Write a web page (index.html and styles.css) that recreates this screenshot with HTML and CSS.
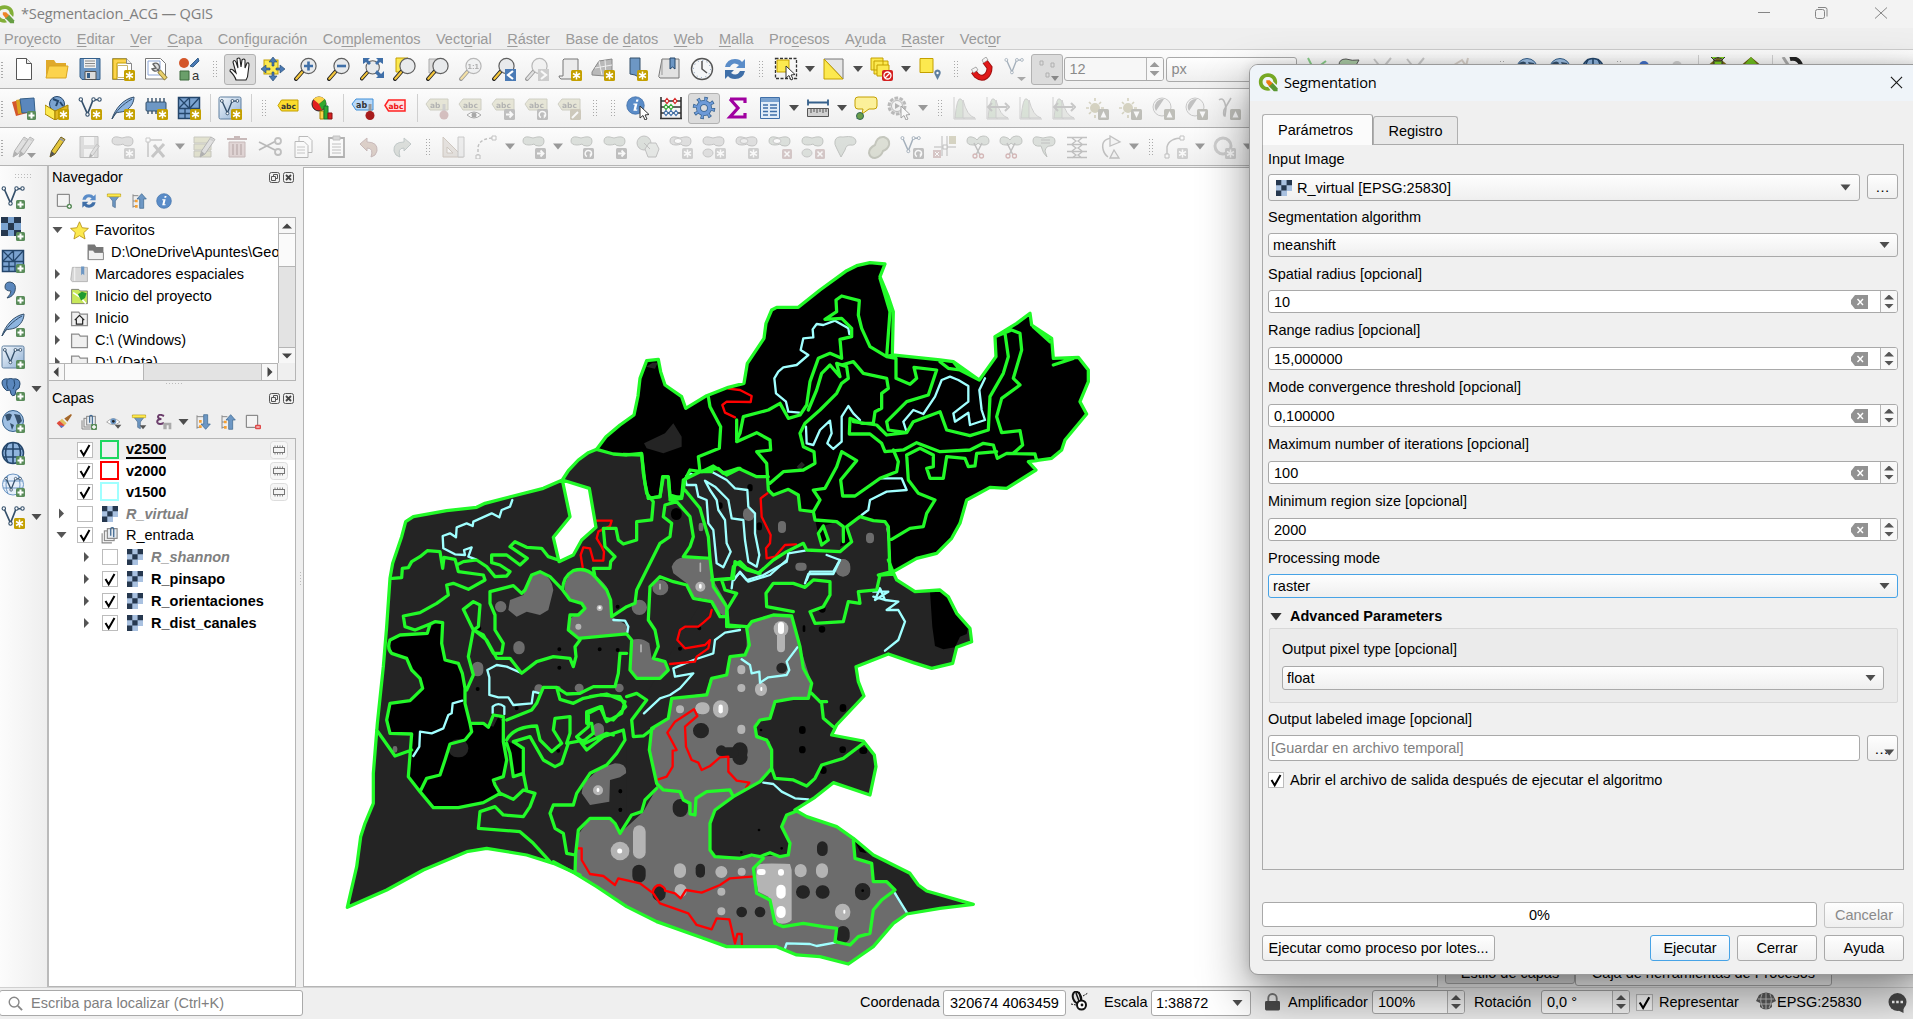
FILE: index.html
```html
<!DOCTYPE html>
<html lang="es">
<head>
<meta charset="utf-8">
<title>*Segmentacion_ACG — QGIS</title>
<link rel="stylesheet" href="styles.css">
</head>
<body>
<svg class="defs" width="0" height="0">
<defs>
<linearGradient id="gl" x1="0" y1="0" x2="1" y2="1"><stop offset="0" stop-color="#f4f8fc"/><stop offset="1" stop-color="#8fb0d4"/></linearGradient>
</defs>
<!-- badges -->
<symbol id="b-new" viewBox="0 0 24 24"><rect x="13" y="13" width="11" height="11" rx="1.5" fill="#c4a000"/><path d="M18.500 14.500v8M15 16.500l7 4M22 16.500l-7 4" stroke="#fff" stroke-width="1.500"/></symbol>
<symbol id="b-add" viewBox="0 0 24 24"><rect x="15" y="15" width="9" height="9" rx="1.500" fill="#5a8c5a"/><path d="M19.500 16.500v6M16.500 19.500h6" stroke="#fff" stroke-width="2"/></symbol>
<symbol id="b-arr" viewBox="0 0 24 24"><rect x="13" y="13" width="11" height="11" rx="1.500" fill="#777"/><path d="M15 18.500h6M18.500 15.500l3 3l-3 3" stroke="#fff" stroke-width="1.800" fill="none"/></symbol>
<symbol id="b-rot" viewBox="0 0 24 24"><rect x="13" y="13" width="11" height="11" rx="1.500" fill="#777"/><path d="M17 21.500a3.200 3.200 0 1 1 3.500-.5v-2.500" stroke="#fff" stroke-width="1.500" fill="none"/></symbol>
<symbol id="b-up" viewBox="0 0 24 24"><rect x="13" y="13" width="11" height="11" rx="1.500" fill="#77776a"/><path d="M18.500 15l3 6.500h-6z" fill="#fff"/></symbol>
<symbol id="b-down" viewBox="0 0 24 24"><rect x="13" y="13" width="11" height="11" rx="1.500" fill="#77776a"/><path d="M18.500 22l3-6.500h-6z" fill="#fff"/></symbol>
<symbol id="b-x" viewBox="0 0 24 24"><rect x="14" y="14" width="10" height="10" rx="1.500" fill="#a98a8a"/><path d="M16.500 16.500l5 5M21.500 16.500l-5 5" stroke="#fff" stroke-width="1.500"/></symbol>
<!-- shared shapes -->
<symbol id="logo" viewBox="0 0 24 24"><path d="M12 1.500C5.500 1.500 1 6 1 12s4.500 10.500 11 10.500c1.500 0 2.500-.2 3-.5l-3-4c-4 0-6.500-2.500-6.500-6S8 6 12 6s6.300 2.500 6.300 5.500l4 4c.5-1 .7-2.500.7-3.500C23 6 18.500 1.500 12 1.500z" fill="#76a824"/><path d="M13 13h4.500l6 6.500V23H19l-6-6z" fill="#589632"/><path d="M10 10h4l3.500 3.500L13.500 17 10 13z" fill="#ee7913"/></symbol>
<symbol id="mag" viewBox="0 0 24 24"><path d="M2 22L9 14" stroke="#222" stroke-width="4" stroke-linecap="round"/><path d="M2.300 21.700L8 15.200" stroke="#f5c73d" stroke-width="2.200" stroke-linecap="round"/><circle cx="14.500" cy="9" r="7.600" fill="#e8eaec" stroke="#5f5f5f" stroke-width="1.200"/></symbol>
<symbol id="vee" viewBox="0 0 24 24"><path d="M3 3.500L9.500 18 15 4l6.500-.5" fill="none" stroke="#35506b" stroke-width="1.700"/><g fill="#fff" stroke="#35506b" stroke-width="1.100"><circle cx="2.800" cy="3.500" r="1.700"/><circle cx="9.500" cy="18.500" r="1.700"/><circle cx="15.500" cy="3.500" r="1.700"/><circle cx="21.500" cy="3.500" r="1.700"/></g></symbol>
<symbol id="vec-new" viewBox="0 0 24 24"><use href="#vee"/><use href="#b-new"/></symbol>
<symbol id="vec-add" viewBox="0 0 24 24"><use href="#vee"/><use href="#b-add"/></symbol>
<symbol id="feather" viewBox="0 0 24 24"><path d="M1 23C4 13 12 3 23 1c0 5-3 11-9 14-4 1.500-7 1-9 2z" fill="#8db4e0" stroke="#35506b"/><path d="M1 23C5 15 12 8 21 3" stroke="#35506b" fill="none"/></symbol>
<symbol id="chip" viewBox="0 0 24 24"><path d="M4 2v16M8 2v16M12 2v16M16 2v16M20 2v16" stroke="#35506b" stroke-width="1.400"/><rect x="2" y="6" width="20" height="9" rx="1" fill="#6d97c4" stroke="#35506b"/></symbol>
<symbol id="mesh" viewBox="0 0 24 24"><rect x="1.500" y="1.500" width="21" height="21" fill="#7ba3d0" stroke="#24466b" stroke-width="1.500"/><path d="M1.500 12.500h21M12.500 1.500v11M8 12.500v10M2 2l10 10M12 2L2 12M22 2L13 12M2 17.500h12M14 13v9" stroke="#24466b" stroke-width="1.300"/></symbol>
<symbol id="virt" viewBox="0 0 24 24"><rect x="1" y="1" width="22" height="22" rx="1.500" fill="url(#gl)" stroke="#5f7f9f"/><use href="#vee" x="1.500" y="2" width="20" height="20"/></symbol>
<symbol id="raster" viewBox="0 0 16 16"><path d="M0 0h16v11h-5v5H0z" fill="#a9c1e0"/><path d="M0 0h5.300v5.300H0zM10.600 0H16v5.300h-5.400zM5.300 5.300h5.300v5.300H5.300zM0 10.600h5.300V16H0z" fill="#26384f"/></symbol>
<symbol id="globe" viewBox="0 0 24 24"><circle cx="12" cy="12" r="10.500" fill="#9fc0e4" stroke="#35608b"/><path d="M4 6q5-3 7 0l-2 5-3 1zM13 5l6 1 2 6-4 4-2-6zM9 14l4 2-2 5z" fill="#35506b"/></symbol>
<symbol id="globeg" viewBox="0 0 24 24"><circle cx="12" cy="12" r="10.500" fill="#8fb4dd" stroke="#24466b" stroke-width="1.500"/><path d="M2 8h20M2 16h20M12 1v22M7 2q-5 10 0 20M17 2q5 10 0 20" stroke="#24466b" stroke-width="1.600" fill="none"/></symbol>
<symbol id="blob" viewBox="0 0 24 24"><path d="M1 6q0-5 6-4 4 2 8 0 7-1 7 4t-5 5q-4 0-5-2-2 1-5 1-6 0-6-4z" fill="#b5bfb5" stroke="#777d77"/></symbol>
<symbol id="pencil" viewBox="0 0 24 24"><path d="M5 22l1.500-6L16 2l4 2.500L10 19z" fill="#e4c63c" stroke="#6b5a1a"/><path d="M5 22l1.500-6 3.500 3z" fill="#555"/><path d="M15 3.500l4 2.500" stroke="#999" stroke-width="2"/></symbol>
<symbol id="grp" viewBox="0 0 24 24"><path d="M1.500 9.500v13h13" fill="none" stroke="#888" stroke-width="1.500"/><rect x="4.500" y="6.500" width="13" height="13" fill="#eee" stroke="#888" stroke-width="1.500"/><rect x="8.500" y="3.500" width="13" height="13" fill="#e6ebf0" stroke="#888" stroke-width="1.500"/><path d="M13 13V4a2 2 0 0 1 4 0v11" fill="none" stroke="#35608b" stroke-width="1.600"/></symbol>
<symbol id="fold" viewBox="0 0 24 24"><path d="M2 4h9l2 2.500h9V21H2z" fill="#f0f0f0" stroke="#8c8c8c" stroke-width="1.600"/></symbol>
<symbol id="sync" viewBox="0 0 24 24"><path d="M2 10Q4 2 12 2q5 0 7 3l3-3v9h-9l3-3q-6-4-9 2z" fill="#5a8cc8"/><path d="M22 14q-2 8-10 8-5 0-7-3l-3 3v-9h9l-3 3q6 4 9-2z" fill="#3f6fa8"/></symbol>
<symbol id="filter" viewBox="0 0 24 24"><path d="M2 2h20l-8 10v10l-4-2v-8z" fill="#6d97c4" stroke="#4a6a8c"/><path d="M2 1.500h20v4H2z" fill="#fce94f" stroke="#c4a000" stroke-width=".8"/></symbol>
<symbol id="tree-up" viewBox="0 0 24 24"><path d="M3 2v20M3 4h8M3 20h6M3 12h4" stroke="#8a8a8a" stroke-width="1.500"/><path d="M6 10h4v4H6zM6 18h4v4H6z" fill="#f5a032"/><path d="M16 1l7 8h-4v14h-6V9H9z" fill="#6d97c4" stroke="#35608b"/></symbol>
<symbol id="tree-down" viewBox="0 0 24 24"><path d="M3 2v20M3 4h10M3 20h6" stroke="#8a8a8a" stroke-width="1.500"/><path d="M6 9h4v4H6zM6 17h4v4H6z" fill="#f5a032"/><path d="M16 23l7-8h-4V1h-6v14H9z" fill="#6d97c4" stroke="#35608b"/></symbol>
<symbol id="info" viewBox="0 0 24 24"><circle cx="12" cy="12" r="11" fill="#5a8cc8" stroke="#3f6fa8"/><path d="M13 4.500h2.800l-.6 2.800h-2.800zM9.500 9.500h5l-1.800 7.500h1.800l-.4 1.500H9.300l1.700-7.500H9.200z" fill="#fff"/></symbol>
<symbol id="cursor" viewBox="0 0 24 24"><path d="M12 9v12l3-2.500 2 4.500 2-1-2-4 4-.5z" fill="#fff" stroke="#333"/></symbol>
<symbol id="tag" viewBox="0 0 24 24"><path d="M1 8l4-5h18v11H5z" fill="#cfcdaa" stroke="#98977f"/></symbol>
<symbol id="hist" viewBox="0 0 24 24"><path d="M1 1v22h22" stroke="#999" fill="none"/><path d="M2 22Q4 0 8 3t4 19z" fill="#b4c8b0" stroke="#999"/><path d="M10 22V4q4 16 12 18z" fill="#d0d4cc" stroke="#999"/></symbol>
<symbol id="sun" viewBox="0 0 24 24"><circle cx="10" cy="12" r="5" fill="#a8a27a"/><path d="M10 2v3M10 19v3M1 12h3M16 12h3M4 6l2 2M16 6l-2 2M4 18l2-2" stroke="#a8a27a" stroke-width="1.700"/></symbol>
<symbol id="contrast" viewBox="0 0 24 24"><circle cx="11" cy="11" r="9" fill="#eee" stroke="#888"/><path d="M13 3a8 8 0 0 0-8 12z" fill="#777"/></symbol>
<symbol id="scis" viewBox="0 0 24 24"><path d="M1 6q0-5 5-4 4 1 5 3 2-4 6-4 6 0 6 5 0 4-5 4-5 0-6-2-1 3-5 2-6 0-6-4z" fill="#b5bfb5" stroke="#777d77"/><path d="M8 8l6 12M16 8l-6 12" stroke="#777" stroke-width="1.500"/><circle cx="9" cy="21" r="2" fill="none" stroke="#a66" stroke-width="1.300"/><circle cx="15.500" cy="21" r="2" fill="none" stroke="#a66" stroke-width="1.300"/></symbol>
<symbol id="float" viewBox="0 0 11 11"><rect x=".5" y=".5" width="10" height="10" rx="2" fill="none" stroke="#555"/><path d="M4.500 4V2.500h4v4H7M2.500 4.500h4v4h-4z" fill="none" stroke="#555"/></symbol>
<symbol id="closeb" viewBox="0 0 11 11"><rect x=".5" y=".5" width="10" height="10" rx="2" fill="none" stroke="#555"/><path d="M3 3l5 5M8 3L3 8" stroke="#444" stroke-width="1.800"/></symbol>
<symbol id="mem" viewBox="0 0 18 18"><rect x=".5" y=".5" width="17" height="17" rx="3" fill="#f6f6f6" stroke="#ddd"/><path d="M5 4.500v9M7.500 4.500v9M10 4.500v9M12.500 4.500v9" stroke="#888"/><rect x="3.500" y="6.500" width="11" height="5" fill="#f4f4f4" stroke="#777"/></symbol>
<symbol id="clr" viewBox="0 0 17 14"><path d="M4 0h13v14H4L0 9V5z" fill="#929292"/><path d="M6.500 4l5.500 6M12 4l-5.500 6" stroke="#fff" stroke-width="1.400"/></symbol>
<symbol id="tick" viewBox="0 0 16 16"><rect x=".5" y=".5" width="15" height="15" fill="#fff" stroke="#bcbcbc"/><path d="M3.500 8l3.200 5.200L12.500 3" fill="none" stroke="#000" stroke-width="2"/></symbol>
<symbol id="untick" viewBox="0 0 16 16"><rect x=".5" y=".5" width="15" height="15" fill="#fff" stroke="#bcbcbc"/></symbol>
</svg>

<header class="titlebar">
  <svg class="logo"><use href="#logo"/></svg><span class="wtitle">*Segmentacion_ACG — QGIS</span>
  <svg class="winbtns" viewBox="0 0 160 28"><g fill="none" stroke="#858585"><path d="M15 12.500h12"/><rect x="72.500" y="9.500" width="9" height="9" rx="2"/><path d="M75 7.500h7q2 0 2 2v7"/><path d="M132 7.500l12 11M144 7.500l-12 11"/></g></svg>
</header>
<nav class="menubar"><span>Pro<u>y</u>ecto</span><span><u>E</u>ditar</span><span><u>V</u>er</span><span><u>C</u>apa</span><span>Con<u>f</u>iguración</span><span>Co<u>m</u>plementos</span><span>Vect<u>o</u>rial</span><span><u>R</u>áster</span><span>Base de <u>d</u>atos</span><span><u>W</u>eb</span><span><u>M</u>alla</span><span>Pro<u>c</u>esos</span><span>A<u>y</u>uda</span><span><u>R</u>aster</span><span>Vect<u>o</u>r</span></nav>

<div class="toolbar">
  <i class="s"><svg viewBox="0 0 24 24"><path d="M4.500 1.500h10l5 5v16h-15z" fill="#fff" stroke="#555"/><path d="M14.500 1.500v5h5" fill="#eee" stroke="#555"/></svg></i>
  <i class="s"><svg viewBox="0 0 24 24"><path d="M1 3h8l2 3h10v4H4L1 20z" fill="#e0a92a"/><path d="M4 9h19l-2 12H1z" fill="#fcd34c" stroke="#d9a520"/></svg></i>
  <i class="s"><svg viewBox="0 0 24 24"><path d="M2 1.500h20v21H4L2 20z" fill="#6d97c4" stroke="#35608b"/><path d="M6 2h12v9H6z" fill="#f0f0f0"/><path d="M7 4h10M7 6.500h10M7 9h10" stroke="#888"/><path d="M7 14.500h11v8H7z" fill="#dcdcdc" stroke="#555"/><path d="M9 16h3v5H9z" fill="#35608b"/></svg></i>
  <i class="s"><svg viewBox="0 0 24 24"><path d="M1.500 1.500h14l5 5v16h-19z" fill="#fff" stroke="#888"/><path d="M2 2h14v4H6v16H2z" fill="#fcd34c" stroke="#c4a000"/><path d="M6.500 8.500h10v12h-10z" fill="#fff" stroke="#c9b46a"/><path d="M15.500 1.500v5h5" fill="#eee" stroke="#888"/><use href="#b-new"/></svg></i>
  <i class="s"><svg viewBox="0 0 24 24"><path d="M1.500 1.500h15l5 5v15.500h-20z" fill="#fff" stroke="#777"/><path d="M4 4h12v14H4z" fill="#fff" stroke="#8fa8d8"/><path d="M9 7a4 4 0 1 1-1 5l4-1zM13 12l4 4" fill="#ddd" stroke="#666" stroke-width="1.400"/><path d="M15 14l7 8" stroke="#8a7a3a" stroke-width="4.500"/><path d="M15.500 14.500l6 7" stroke="#e8cf6a" stroke-width="2.800"/></svg></i>
  <i class="s"><svg viewBox="0 0 24 24"><circle cx="7" cy="6" r="5" fill="#d4562a"/><path d="M13 9l8-8 1 3-6 6z" fill="#4a7ab5" stroke="#35608b"/><path d="M3 14h9v9H3z" fill="#6a9f6a" stroke="#3c6b3c"/><text x="15" y="23" font-family="Liberation Sans,sans-serif" font-size="13" fill="#333">a</text></svg></i>
  <i class="grip"></i>
  <i class="s on"><svg viewBox="0 0 24 24"><path d="M8 23q-1-4-6-9 0-3 3-1l3 3-3-11q1-3 3 0l2 6-1-9q2-2 3 0l1 8 1-7q2-2 3 0v8l2-5q2-1 2 2l-1 8q0 4-2 7z" fill="#fff" stroke="#222" stroke-width="1.100"/></svg></i>
  <i class="s"><svg viewBox="0 0 24 24"><rect x="3" y="3" width="14" height="14" fill="#fce94f" stroke="#c4a000"/><path d="M12 0l4 5h-3v4h-2V5H8zM12 24l4-5h-3v-4h-2v4H8zM0 12l5-4v3h4v2H5v3zM24 12l-5-4v3h-4v2h4v3z" fill="#4a7ab5" stroke="#24466b" stroke-width=".6"/></svg></i>
  <i class="s"><svg viewBox="0 0 24 24"><use href="#mag"/><path d="M14.500 4.500v9M10 9h9" stroke="#3f6fa8" stroke-width="2.600"/></svg></i>
  <i class="s"><svg viewBox="0 0 24 24"><use href="#mag"/><path d="M10 9h9" stroke="#3f6fa8" stroke-width="2.600"/></svg></i>
  <i class="s"><svg viewBox="0 0 24 24"><use href="#mag" width="21" height="24" y="1"/><path d="M3 1h7L8 3l3 3-2 2-3-3-3 2zM23 1h-7l2 2-3 3 2 2 3-3 3 2zM24 21h-8l2-2-3-3 2-3 4 4 3-3z" fill="#3f6fa8"/></svg></i>
  <i class="s"><svg viewBox="0 0 24 24"><path d="M3 1h12v14H3z" fill="#fce94f" stroke="#c4a000"/><use href="#mag"/></svg></i>
  <i class="s"><svg viewBox="0 0 24 24"><path d="M3 2h12v14H3z" fill="#ddd" stroke="#aaa"/><use href="#mag"/></svg></i>
  <i class="s dis"><svg viewBox="0 0 24 24"><use href="#mag"/><text x="8.500" y="12" font-family="Liberation Sans,sans-serif" font-weight="bold" font-size="8" fill="#444">1:1</text></svg></i>
  <i class="s"><svg viewBox="0 0 24 24"><use href="#mag"/><path d="M13 12h11v12H13z" fill="#4a7ab5"/><path d="M21 14l-5 4 5 4" stroke="#fff" stroke-width="2.200" fill="none"/></svg></i>
  <i class="s dis gray"><svg viewBox="0 0 24 24"><use href="#mag"/><path d="M13 12h11v12H13z" fill="#999"/><path d="M16 14l5 4-5 4" stroke="#fff" stroke-width="2.200" fill="none"/></svg></i>
  <i class="s"><svg viewBox="0 0 24 24"><path d="M6 2h14v20H3q-2-1-2-3h4V3z" fill="#ececec" stroke="#777"/><use href="#b-new"/></svg></i>
  <i class="s"><svg viewBox="0 0 24 24"><path d="M1 15L8 4l13-2v13l-7 4-13-1z" fill="#b9b9b9" stroke="#888"/><path d="M4 11l17-3M8 4l3 14M14 3l1 15" stroke="#eee" fill="none"/><use href="#b-new"/></svg></i>
  <i class="s"><svg viewBox="0 0 24 24"><path d="M6 1h10v20l-5-3-5-1z" fill="#6d97c4" stroke="#35506b"/><use href="#b-new"/></svg></i>
  <i class="s"><svg viewBox="0 0 24 24"><path d="M5 2h17v19H3q-2-1-1-3z" fill="#e2e2e2" stroke="#777"/><path d="M5 2v16" stroke="#999"/><path d="M13 1h5v11l-2.500-2-2.500 2z" fill="#6d97c4" stroke="#24466b"/></svg></i>
  <i class="s"><svg viewBox="0 0 24 24"><circle cx="12" cy="12" r="10.500" fill="#f4f6f8" stroke="#555" stroke-width="1.400"/><path d="M12 4v8l5 4" fill="none" stroke="#555" stroke-width="1.500"/><circle cx="12" cy="12" r="8.500" fill="none" stroke="#7a95b5" stroke-dasharray="1 3.450"/></svg></i>
  <i class="s"><svg viewBox="0 0 24 24"><use href="#sync"/></svg></i>
  <i class="grip"></i>
  <i class="s"><svg viewBox="0 0 24 24"><rect x="1.500" y="1.500" width="21" height="20" fill="none" stroke="#333" stroke-width="1.300" stroke-dasharray="3 1.500"/><path d="M3 3h12v12H3z" fill="#fce94f" stroke="#c4a000"/><use href="#cursor"/></svg></i><i class="dd"></i>
  <i class="s"><svg viewBox="0 0 24 24"><path d="M2 2h19v20z" fill="#e6e6e6" stroke="#777"/><path d="M2 2v20h19z" fill="#fce94f" stroke="#c4a000"/></svg></i><i class="dd"></i>
  <i class="s"><svg viewBox="0 0 24 24"><path d="M1 1h12v12H1zM4 4h14v5H8v8H4z" fill="#fce94f" stroke="#c4a000"/><path d="M7 8h12v11H7z" fill="#fce94f" stroke="#c4a000"/><rect x="12" y="13" width="11" height="11" rx="2" fill="#d42020"/><circle cx="17.500" cy="18.500" r="3.500" fill="none" stroke="#fff" stroke-width="1.300"/><path d="M15 21l5-5" stroke="#fff" stroke-width="1.300"/></svg></i><i class="dd"></i>
  <i class="s"><svg viewBox="0 0 24 24"><path d="M2 1.500h13v14H2z" fill="#fce94f" stroke="#c4a000"/><path d="M19.500 23l-3-6q-1-4 3-4.500 4 .5 3 4.500z" fill="#5f7f9f"/><circle cx="19.500" cy="16" r="1.200" fill="#fff"/></svg></i>
  <i class="grip"></i>
  <i class="s"><svg viewBox="0 0 24 24"><path d="M4.500 14.500l3 4q5 4 9 1t4-9l-4.500-6" fill="none" stroke="#a01010" stroke-width="6"/><path d="M4.500 14.500l3 4q5 4 9 1t4-9l-4.500-6" fill="none" stroke="#e01818" stroke-width="4"/><path d="M2.500 12.500l4.500-2.500 2 3-4.500 3zM13 3l4-3 2 3-4.500 3z" fill="#f4f4f4" stroke="#777" stroke-width=".6"/></svg></i>
  <i class="s dis"><svg viewBox="0 0 24 24"><use href="#vee" x="2" width="20" height="20"/><path d="M15 20h9l-4.500 4z" fill="#444"/></svg></i>
  <i class="s on"><svg viewBox="0 0 24 24"><path d="M5 4h3v4H5zM16 6h3v4h-3zM11 16h3v4h-3z" fill="none" stroke="#b0b0b0"/><path d="M16 19h8l-4 5z" fill="#888"/></svg></i>
  <span class="spin tspin"><b>12</b><i class="ud"></i></span>
  <span class="combo px">px</span>
  <i class="s"><svg viewBox="0 0 24 24"><path d="M3 1l6 12 12-9" stroke="#8c8" stroke-width="2" fill="none"/></svg></i>
  <i class="s"><svg viewBox="0 0 24 24"><path d="M1 8q0-6 7-6 6 2 13 1l-4 7H3z" fill="#a9c9a4" stroke="#555"/></svg></i>
  <i class="s dis"><svg viewBox="0 0 24 24"><path d="M3 2l8 10 9-11" stroke="#888" stroke-width="2" fill="none"/></svg></i>
  <i class="s dis"><svg viewBox="0 0 24 24"><path d="M3 2l8 10 9-11" stroke="#888" stroke-width="2" fill="none"/></svg></i>
  <i class="s dis wide"><svg viewBox="0 0 24 24"><path d="M3 8l8-5 4 6 2-8" stroke="#a98" stroke-width="2" fill="none"/></svg></i>
  <i class="grip"></i>
  <i class="s"><svg viewBox="0 0 24 24"><use href="#globe"/></svg></i>
  <i class="s"><svg viewBox="0 0 24 24"><use href="#globe"/></svg></i>
  <i class="s"><svg viewBox="0 0 24 24"><use href="#globeg"/></svg></i>
  <i class="grip"></i>
  <i class="s"><svg viewBox="0 0 24 24"><circle cx="12" cy="9" r="5" fill="#3f6fc8"/></svg></i>
  <i class="s dis"><svg viewBox="0 0 24 24"><circle cx="12" cy="9" r="5" fill="#999"/></svg></i>
  <i class="sep"></i>
  <i class="s"><svg viewBox="0 0 24 24"><path d="M12 0L0 10h24z" fill="#7a6a1a"/><path d="M5 0l4 4h6l4-4M8 2q4-3 8 0v6H8z" fill="#7ed321" stroke="#333"/></svg></i>
  <i class="s"><svg viewBox="0 0 24 24"><path d="M12 0L0 10h24z" fill="#6a5a10"/><path d="M12 0L6 7h12z" fill="#6fbf1f"/></svg></i>
  <i class="sep"></i>
  <i class="s"><svg viewBox="0 0 24 24"><path d="M3 0l9 14" stroke="#aaa" stroke-width="3" fill="none"/><path d="M10 2q8-2 11 6" stroke="#222" stroke-width="4" fill="none"/></svg></i>
</div>

<div class="toolbar">
  <i class="s"><svg viewBox="0 0 24 24"><path d="M0 6l11-3 4 14-11 3z" fill="#d4562a"/><path d="M4 4l12-2 2 14-12 2z" fill="#d9a520"/><path d="M8 3l14-1 1 14-13 1z" fill="#5a87bd" stroke="#35608b"/><use href="#b-add"/></svg></i>
  <i class="s"><svg viewBox="0 0 24 24"><circle cx="12" cy="8" r="7.500" fill="#7ba3d0" stroke="#24466b"/><path d="M8 3l5 2-2 5M15 6l3 4" stroke="#24466b" stroke-width="2" fill="none"/><path d="M0 9l10 6v9L0 18z" fill="#fce94f" stroke="#a88400"/><path d="M10 15l13-6v9l-13 6z" fill="#e0b820" stroke="#a88400"/><use href="#b-new"/></svg></i>
  <i class="s"><svg viewBox="0 0 24 24"><use href="#vec-new"/></svg></i>
  <i class="s"><svg viewBox="0 0 24 24"><use href="#feather"/><use href="#b-new"/></svg></i>
  <i class="s"><svg viewBox="0 0 24 24"><use href="#chip"/><use href="#b-new"/></svg></i>
  <i class="s"><svg viewBox="0 0 24 24"><use href="#mesh"/><use href="#b-new"/></svg></i>
  <i class="sep"></i>
  <i class="s"><svg viewBox="0 0 24 24"><use href="#virt"/><use href="#b-new"/></svg></i>
  <i class="sep"></i><i class="grip"></i>
  <i class="s"><svg viewBox="0 0 24 24"><path d="M1 9.500L4.500 4H21v11H4.500z" fill="#fcdc2c" stroke="#c4a000"/><text x="4" y="12.500" font-family="DejaVu Sans,sans-serif" font-weight="bold" font-size="7.500" fill="#333">abc</text></svg></i>
  <i class="s"><svg viewBox="0 0 24 24"><circle cx="9" cy="8" r="7" fill="#e02020" stroke="#222"/><path d="M9 8L3 3q6-5 12 0z" fill="#fcd34c"/><path d="M9 8l6-5q3 6-3 11z" fill="#2fa82f"/><path d="M10 15h4v8h-4z" fill="#fcd34c" stroke="#a88400"/><path d="M14 10h4v13h-4z" fill="#2fa82f" stroke="#173"/><path d="M18 17h4v6h-4z" fill="#d42020" stroke="#811"/></svg></i>
  <i class="sep"></i>
  <i class="s"><svg viewBox="0 0 24 24"><path d="M1 8l4-5h17v11H5z" fill="#b8d8f8" stroke="#3f8fd8"/><text x="5" y="12" font-family="DejaVu Sans,sans-serif" font-weight="bold" font-size="8" fill="#333">ab</text><path d="M19 8v9" stroke="#999" stroke-width="3"/><circle cx="19" cy="19.500" r="4.500" fill="#a81c1c"/></svg></i>
  <i class="s"><svg viewBox="0 0 24 24"><path d="M1 9.500L4.500 4H21v11H4.500z" fill="#fde0e0" stroke="#f22" stroke-width="1.500"/><text x="4.500" y="12.500" font-family="DejaVu Sans,sans-serif" font-weight="bold" font-size="7.500" fill="#e11">abc</text></svg></i>
  <i class="sep"></i>
  <i class="s dis"><svg viewBox="0 0 24 24"><use href="#tag"/><text x="5" y="11.500" class="tg">ab</text><path d="M19 8v9" stroke="#999" stroke-width="3"/><circle cx="19" cy="19" r="4.500" fill="#a77"/></svg></i>
  <i class="s dis"><svg viewBox="0 0 24 24"><use href="#tag"/><text x="5" y="11.500" class="tg">abc</text><path d="M9 19q7-6 14 0-7 6-14 0z" fill="#fff" stroke="#444"/><circle cx="16" cy="19" r="2.500" fill="#444"/></svg></i>
  <i class="s dis"><svg viewBox="0 0 24 24"><use href="#tag"/><text x="5" y="11.500" class="tg">abc</text><use href="#b-arr"/></svg></i>
  <i class="s dis"><svg viewBox="0 0 24 24"><use href="#tag"/><text x="5" y="11.500" class="tg">abc</text><use href="#b-rot"/></svg></i>
  <i class="s dis"><svg viewBox="0 0 24 24"><use href="#tag"/><text x="5" y="11.500" class="tg">abc</text><rect x="13" y="13" width="11" height="11" rx="1.500" fill="#998f70"/><path d="M15 22l6-6" stroke="#fff" stroke-width="2"/></svg></i>
  <i class="grip"></i><i class="grip"></i>
  <i class="s"><svg viewBox="0 0 24 24"><use href="#info" x="0" y="0" width="19" height="19"/><use href="#cursor" x="2" y="1"/></svg></i>
  <i class="s"><svg viewBox="0 0 24 24"><path d="M2 1v21M22 1v21M1 22.500h22M2 5h20M2 11h20M2 17h20" stroke="#333" stroke-width="1.600"/><g stroke-width="1.200"><path d="M8 2.500l2 2.500-2 2.500L6 5zM16 2.500l2 2.500-2 2.500-2-2.500z" fill="#fff" stroke="#d42020"/><path d="M7 8.500l2 2.500-2 2.500L5 11zM12 8.500l2 2.500-2 2.500-2-2.500z" fill="#fff" stroke="#2fa82f"/><path d="M7 14.500l2 2.500-2 2.500L5 17zM12 14.500l2 2.500-2 2.500-2-2.500zM17 14.500l2 2.500-2 2.500-2-2.500z" fill="#fff" stroke="#3f6fa8"/></g></svg></i>
  <i class="s on"><svg viewBox="0 0 24 24"><circle cx="12" cy="12" r="9" fill="none" stroke="#35608b" stroke-width="4.500" stroke-dasharray="3.200 3.870"/><circle cx="12" cy="12" r="5.500" fill="#dcdcdc" stroke="#35608b" stroke-width="5"/><circle cx="12" cy="12" r="5.500" fill="none" stroke="#6d9ad8" stroke-width="3.500"/><circle cx="12" cy="12" r="8.800" fill="none" stroke="#6d9ad8" stroke-width="3.500" stroke-dasharray="2 4.910" stroke-dashoffset="-.6"/></svg></i>
  <i class="s"><svg viewBox="0 0 24 24"><path d="M5 3h15v4M5 3l8 9-8 9h15v-4" fill="none" stroke="#a000a0" stroke-width="3.200"/></svg></i>
  <i class="s"><svg viewBox="0 0 24 24"><path d="M2.500 1.500h19v21h-19z" fill="#e2edf8" stroke="#3f6fa8"/><path d="M3 2h18v4H3z" fill="#7ba3d0"/><path d="M5 9h5M12 9h7M5 12h5M12 12h7M5 15.500h5M12 15.500h7M5 19h5M12 19h7" stroke="#3f6fa8" stroke-width="1.300"/></svg></i><i class="dd"></i>
  <i class="s"><svg viewBox="0 0 24 24"><path d="M2 6.500h20M2 3.500v6M22 3.500v6" stroke="#35608b" stroke-width="1.800"/><path d="M1.500 12.500h21v8h-21z" fill="#d0d0d0" stroke="#555"/><path d="M5 13v4M8 13v3M11 13v4M14 13v3M17 13v4M20 13v3" stroke="#555"/></svg></i><i class="dd"></i>
  <i class="s"><svg viewBox="0 0 24 24"><path d="M4 1h16q3 0 3 3v6q0 3-3 3h-5l-7 5 1-5H4q-3 0-3-3V4q0-3 3-3z" fill="#fcf09a" stroke="#c4a000"/><path d="M7 17q-3 0-4 6" stroke="#35608b" fill="none"/><circle cx="6" cy="20" r="3.500" fill="#6a9f4a" stroke="#365"/></svg></i>
  <i class="s dis"><svg viewBox="0 0 24 24"><circle cx="10" cy="10" r="8" fill="#ccc" stroke="#666" stroke-width="3" stroke-dasharray="3.500 1.500"/><circle cx="10" cy="10" r="5.500" fill="#eee" stroke="#666"/><path d="M8 7l5 3-5 3z" fill="#555"/><use href="#cursor" x="2" y="1"/></svg></i><i class="dd off"></i>
  <i class="grip"></i>
  <i class="s dis"><svg viewBox="0 0 24 24"><use href="#hist"/></svg></i>
  <i class="s dis"><svg viewBox="0 0 24 24"><use href="#hist"/><path d="M3 11h18M6 7l-4 4 4 4M19 7l4 4-4 4" stroke="#888" fill="none" stroke-width="2"/></svg></i>
  <i class="s dis"><svg viewBox="0 0 24 24"><use href="#hist"/></svg></i>
  <i class="s dis"><svg viewBox="0 0 24 24"><use href="#hist"/><path d="M3 11h18M6 7l-4 4 4 4M19 7l4 4-4 4" stroke="#888" fill="none" stroke-width="2"/></svg></i>
  <i class="s dis"><svg viewBox="0 0 24 24"><use href="#sun"/><use href="#b-up"/></svg></i>
  <i class="s dis"><svg viewBox="0 0 24 24"><use href="#sun"/><use href="#b-down"/></svg></i>
  <i class="s dis"><svg viewBox="0 0 24 24"><use href="#contrast"/><use href="#b-up"/></svg></i>
  <i class="s dis"><svg viewBox="0 0 24 24"><use href="#contrast"/><use href="#b-down"/></svg></i>
  <i class="s dis"><svg viewBox="0 0 24 24"><path d="M2 4q5-4 7 8l-1 8q-2 0-1-6L14 2" fill="none" stroke="#777" stroke-width="1.600"/><use href="#b-up"/></svg></i>
</div>

<div class="toolbar last">
  <i class="s dis"><svg viewBox="0 0 24 24"><g class="gray"><use href="#pencil" x="-4" width="24" height="24"/><use href="#pencil" x="2" width="24" height="24"/></g><path d="M15 18h9l-4.500 5z" fill="#222"/></svg></i>
  <i class="s"><svg viewBox="0 0 24 24"><use href="#pencil"/></svg></i>
  <i class="s dis gray"><svg viewBox="0 0 24 24"><path d="M2 1.500h18v21H2z" fill="#bbb" stroke="#777"/><path d="M6 2h10v8H6zM6 14h10v8H6z" fill="#eee"/><use href="#pencil" x="8" y="8" width="16" height="16"/></svg></i>
  <i class="s dis gray"><svg viewBox="0 0 24 24"><use href="#blob"/><use href="#b-new"/></svg></i>
  <i class="s dis gray"><svg viewBox="0 0 24 24"><path d="M4 22V5h14" fill="none" stroke="#888" stroke-width="1.500"/><path d="M2 3h4v4H2z" fill="#fff" stroke="#888"/><path d="M8 22L20 9M10 10l10 12" stroke="#888" stroke-width="3"/></svg></i><i class="dd off"></i>
  <i class="s dis"><svg viewBox="0 0 24 24"><path d="M2 2h17v6H2zM2 9h17v6H2zM2 16h17v6H2z" fill="#c4c498" stroke="#887"/><g class="gray"><use href="#pencil" x="3" width="24" height="24"/></g></svg></i>
  <i class="s dis"><svg viewBox="0 0 24 24"><path d="M4 7h16v15H4z" fill="#c4a8a8" stroke="#866"/><path d="M2 4h20M9 2h6M8 9v11M12 9v11M16 9v11" stroke="#866" stroke-width="1.800"/></svg></i>
  <i class="s dis"><svg viewBox="0 0 24 24"><path d="M1 7l16 8M1 15l17-9" stroke="#666" stroke-width="1.800"/><circle cx="20" cy="17" r="3" fill="none" stroke="#777" stroke-width="1.800"/><circle cx="20" cy="6" r="3" fill="none" stroke="#777" stroke-width="1.800"/></svg></i>
  <i class="s dis"><svg viewBox="0 0 24 24"><path d="M8 1.500h9l4 4v12H8z" fill="#fff" stroke="#666"/><path d="M4 6.500h9l4 4v12H4z" fill="#fff" stroke="#666"/><path d="M6 12h8M6 15h8M6 18h8" stroke="#888"/></svg></i>
  <i class="s dis"><svg viewBox="0 0 24 24"><path d="M5 3h15v19H5z" fill="#fff" stroke="#555" stroke-width="1.800"/><path d="M9 1h7v4H9zM8 9h9M8 12h9M8 15h9M8 18h9" fill="#aaa" stroke="#777"/></svg></i>
  <i class="s dis"><svg viewBox="0 0 24 24"><path d="M3 9l7-6v4q11 0 10 9-1 5-6 6 3-9-4-9v3z" fill="#b89a8a" stroke="#866"/></svg></i>
  <i class="s dis"><svg viewBox="0 0 24 24"><path d="M21 9l-7-6v4Q3 7 4 16q1 5 6 6-3-9 4-9v3z" fill="#b5bdb5" stroke="#788"/></svg></i>
  <i class="grip"></i>
  <i class="s dis"><svg viewBox="0 0 24 24"><path d="M2 2v20h20z" fill="#ccc4bc" stroke="#987"/><path d="M6 12v6h6z" fill="#f5f5f5" stroke="#987"/><path d="M17 2h6v20h-6z" fill="#ddd" stroke="#888"/></svg></i>
  <i class="s dis"><svg viewBox="0 0 24 24"><path d="M4 22V12q2-9 16-9" fill="none" stroke="#777" stroke-width="1.400" stroke-dasharray="3 2"/><path d="M2 20h4v4H2zM18 1h4v4h-4z" fill="#fff" stroke="#777"/></svg></i><i class="dd off"></i>
  <i class="s dis"><svg viewBox="0 0 24 24"><use href="#blob"/><use href="#b-arr"/></svg></i><i class="dd off"></i>
  <i class="s dis"><svg viewBox="0 0 24 24"><use href="#blob"/><use href="#b-rot"/></svg></i>
  <i class="s dis"><svg viewBox="0 0 24 24"><use href="#blob"/><use href="#b-arr"/></svg></i>
  <i class="s dis"><svg viewBox="0 0 24 24"><circle cx="8" cy="8" r="7" fill="#b5bfb5" stroke="#777"/><path d="M9 14l4-6h7l3 6-3 8h-8z" fill="#d0d5d0" stroke="#777"/><path d="M8 8l6 6" stroke="#777"/></svg></i>
  <i class="s dis gray"><svg viewBox="0 0 24 24"><use href="#blob"/><ellipse cx="9" cy="6" rx="4" ry="2.500" fill="#fff" stroke="#888"/><use href="#b-new"/></svg></i>
  <i class="s dis gray"><svg viewBox="0 0 24 24"><use href="#blob"/><ellipse cx="6" cy="18" rx="5" ry="4" fill="#bbc4bb" stroke="#888"/><use href="#b-new"/></svg></i>
  <i class="s dis gray"><svg viewBox="0 0 24 24"><use href="#blob"/><ellipse cx="9" cy="6" rx="4" ry="2.500" fill="#dde" stroke="#888"/><use href="#b-new"/></svg></i>
  <i class="s dis"><svg viewBox="0 0 24 24"><use href="#blob"/><ellipse cx="9" cy="6" rx="4" ry="2.500" fill="#fff" stroke="#888"/><use href="#b-x"/></svg></i>
  <i class="s dis"><svg viewBox="0 0 24 24"><use href="#blob"/><ellipse cx="6" cy="18" rx="5" ry="4" fill="#bbc4bb" stroke="#888"/><use href="#b-x"/></svg></i>
  <i class="s dis"><svg viewBox="0 0 24 24"><path d="M1 6q1-5 8-4 12-2 13 4 0 5-6 4-4 0-5 5l-4 7-4-8q-3-5-2-8z" fill="#b5bfb5" stroke="#777d77"/></svg></i>
  <i class="s dis"><svg viewBox="0 0 24 24"><path d="M2 18q0-5 6-8 2-9 9-8 6 2 5 8-1 4-6 6-2 6-8 7-5 0-6-5z" fill="#b9bfa8" stroke="#80856f" stroke-width="2"/></svg></i>
  <i class="s dis"><svg viewBox="0 0 24 24"><use href="#vee" width="21" height="21"/><use href="#b-rot"/></svg></i>
  <i class="s dis"><svg viewBox="0 0 24 24"><path d="M1 12h22M9 1v20M14 1v20" stroke="#999" stroke-width="1.500"/><path d="M10 10h4v4h-4z" fill="#fff" stroke="#777"/><path d="M0 15h8v8H0z" fill="#b08a8a"/><path d="M2 17l4 4M6 17l-4 4" stroke="#fff"/><path d="M16 1h7v8h-7z" fill="#a8a27a"/></svg></i>
  <i class="s dis"><svg viewBox="0 0 24 24"><use href="#scis"/></svg></i>
  <i class="s dis"><svg viewBox="0 0 24 24"><use href="#scis"/></svg></i>
  <i class="s dis"><svg viewBox="0 0 24 24"><path d="M1 6q0-5 5-4 5 2 10 0 7-1 7 4t-5 5q-4 0-5 5l2 6q-4-3-6-11-8 1-8-5z" fill="#b5bfb5" stroke="#777d77"/><path d="M9 5h9M9 8h9" stroke="#777"/></svg></i>
  <i class="s dis"><svg viewBox="0 0 24 24"><path d="M2 2.500h20M2 9.500h20M2 16.500h20M2 22.500h20M7 3l4 3-4 3M17 3l-4 3 4 3M7 10l4 3-4 3M17 10l-4 3 4 3M7 17l4 3-4 3M17 17l-4 3 4 3" stroke="#777" fill="none" stroke-width="1.300"/></svg></i>
  <i class="s dis"><svg viewBox="0 0 24 24"><path d="M14 3Q3 4 5 14q1 5 5 8" stroke="#777" fill="none" stroke-width="1.500"/><path d="M12 23l4-8 5 8zM12 1v10l10-4z" stroke="#777" fill="#eee" stroke-width="1.300"/></svg></i><i class="dd off"></i>
  <i class="grip"></i>
  <i class="s dis gray"><svg viewBox="0 0 24 24"><path d="M3 22V12q2-9 16-9" fill="none" stroke="#777" stroke-width="1.400"/><path d="M1 19h4v4H1zM16 1h4v4h-4z" fill="#fff" stroke="#777"/><use href="#b-new"/></svg></i><i class="dd off"></i>
  <i class="s dis gray"><svg viewBox="0 0 24 24"><circle cx="11" cy="11" r="8" fill="none" stroke="#999" stroke-width="3"/><use href="#b-new"/></svg></i><i class="dd off"></i>
</div>

<main class="work">
  <div class="side">
    <i class="griph"></i>
    <i class="v"><svg viewBox="0 0 24 24"><use href="#vec-add"/></svg></i>
    <i class="v"><svg viewBox="0 0 24 24"><path d="M0 0h20v19H0z" fill="#7ba3d0"/><path d="M0 0h7v6H0zM13 0h7v6h-7zM7 6h6v7H7zM0 13h7v6H0zM13 13h7v6h-7z" fill="#26384f"/><use href="#b-add"/></svg></i>
    <i class="v"><svg viewBox="0 0 24 24"><use href="#mesh"/><use href="#b-add"/></svg></i>
    <i class="v"><svg viewBox="0 0 24 24"><path d="M4 6q0-5 5-5 7 1 5 9-2 6-8 7 4-4 4-7-6 0-6-4z" fill="#5a87bd" stroke="#35506b"/><use href="#b-add"/></svg></i>
    <i class="v"><svg viewBox="0 0 24 24"><use href="#feather"/><use href="#b-add"/></svg></i>
    <i class="v"><svg viewBox="0 0 24 24"><use href="#virt"/><use href="#b-add"/></svg></i>
    <i class="v"><svg viewBox="0 0 24 24"><path d="M1 6q0-5 6-4 3-1 5 0 7-1 7 5 0 5-4 6l-1 5q-3 2-4-1l-1-4q-4 2-6-2-2-3-2-5z" fill="#5a87bd" stroke="#24466b"/><path d="M6 3q-1 5 1 9M13 3q2 5-1 9" stroke="#24466b" fill="none"/><use href="#b-add"/></svg><i class="dd"></i></i>
    <i class="v"><svg viewBox="0 0 24 24"><use href="#globe"/><use href="#b-add"/></svg></i>
    <i class="v"><svg viewBox="0 0 24 24"><use href="#globeg"/><use href="#b-add"/></svg></i>
    <i class="v"><svg viewBox="0 0 24 24"><circle cx="12" cy="11.500" r="10.500" fill="#e6effa" stroke="#6d97c4"/><path d="M2 8h20M2 15h20M7 2q-4 10 0 19M17 2q4 10 0 19" stroke="#6d97c4" fill="none"/><use href="#vee" x="3" y="3" width="18" height="18"/><use href="#b-add"/></svg></i>
    <i class="v"><svg viewBox="0 0 24 24"><use href="#vec-new"/></svg><i class="dd"></i></i>
  </div>

  <aside class="docks">
    <div class="dhead"><span>Navegador</span><svg><use href="#float"/></svg><svg><use href="#closeb"/></svg></div>
    <div class="dtools nav"><svg viewBox="0 0 24 24"><path d="M2 2h18v18H2z" fill="#f4f4f4" stroke="#777" stroke-width="1.500"/><circle cx="20" cy="20" r="4" fill="#5a8c5a"/><path d="M20 18v4M18 20h4" stroke="#fff" stroke-width="1.500"/></svg><svg><use href="#sync"/></svg><svg><use href="#filter"/></svg><svg><use href="#tree-up"/></svg><svg><use href="#info"/></svg></div>
    <div class="navbox">
      <div class="navlist">
        <div class="nr"><i class="ex op"></i><svg viewBox="0 0 24 24"><path d="M12 1l3.300 7.500 8 .8-6 5.400 1.700 8L12 18.500 5 22.700l1.700-8-6-5.400 8-.8z" fill="#fce94f" stroke="#b08a10"/></svg>Favoritos</div>
        <div class="nr sub"><svg viewBox="0 0 24 24"><path d="M2 2h9l2 3h9v16H2z" fill="#777"/><path d="M3 9h6l2 3h11v9H3z" fill="#f0f0f0" stroke="#777"/></svg>D:\OneDrive\Apuntes\Geografia</div>
        <div class="nr"><i class="ex"></i><svg viewBox="0 0 24 24"><path d="M3 3h19v18H3q-2-1-2-3z" fill="#d8d8d8" stroke="#aaa"/><path d="M6 3v17" stroke="#fff"/><path d="M14 2h4v11l-2-2-2 2z" fill="#6d97c4"/></svg>Marcadores espaciales</div>
        <div class="nr"><i class="ex"></i><svg viewBox="0 0 24 24"><path d="M2 3h9l2 2h9v16H2z" fill="#c8e85a" stroke="#666"/><path d="M4 7l9 6 7 8" stroke="#fff" fill="none" stroke-width="2"/><path d="M10 9l5-3 6 2-2 6-5 3z" fill="#1f9a2f"/></svg>Inicio del proyecto</div>
        <div class="nr"><i class="ex"></i><svg viewBox="0 0 24 24"><use href="#fold"/><path d="M6 14l6-6 6 6M8 13v6h8v-6" fill="none" stroke="#222" stroke-width="1.500"/></svg>Inicio</div>
        <div class="nr"><i class="ex"></i><svg><use href="#fold"/></svg>C:\ (Windows)</div>
        <div class="nr"><i class="ex"></i><svg><use href="#fold"/></svg>D:\ (Data)</div>
      </div>
      <div class="vs"><b class="up"></b><em></em><b class="dn"></b></div>
      <div class="hs"><b class="lf"></b><em></em><b class="rt"></b></div><div class="cn"></div>
    </div>
    <i class="griph mid"></i>
    <div class="dhead cap"><span>Capas</span><svg><use href="#float"/></svg><svg><use href="#closeb"/></svg></div>
    <div class="dtools lay"><svg viewBox="0 0 24 24"><path d="M23 1l-6 9-3-3z" fill="#a5682a" stroke="#a5682a" stroke-width="2"/><path d="M9 7l7 7-3 3-8-6z" fill="#e0c060"/><path d="M5 10l8 7-5 4-7-7z" fill="#e04a3a"/><path d="M5 17l3 4 4-3z" fill="#4a7ad8"/></svg><svg viewBox="0 0 24 24"><use href="#grp"/><use href="#b-add"/></svg><svg viewBox="0 0 24 24"><path d="M1 12q10-10 20 0-10 8-20 0z" fill="#fff" stroke="#888"/><circle cx="11" cy="11" r="4.500" fill="#6d97c4"/><circle cx="11" cy="11" r="2" fill="#222"/><path d="M13 16h10l-5 6z" fill="#555"/></svg><svg viewBox="0 0 24 24"><use href="#filter"/><path d="M13 17h10l-5 6z" fill="#555"/></svg><svg viewBox="0 0 24 24"><path d="M12 3Q4-1 3 4q0 3 5 3.500Q1 8 2 12.500q2 4.500 10 1" fill="none" stroke="#6a3c6a" stroke-width="3"/><path d="M11 13h12v10h-4v-6h-3v6h-5z" fill="#aaa"/></svg><i class="dd"></i><svg><use href="#tree-down"/></svg><svg><use href="#tree-up"/></svg><svg viewBox="0 0 24 24"><path d="M2 2h17v18H2z" fill="#f4f4f4" stroke="#777" stroke-width="1.500"/><rect x="15" y="16" width="9" height="7" rx="2" fill="#e04a4a"/><path d="M17 19.500h5" stroke="#fff" stroke-width="1.500"/></svg></div>
    <div class="laybox">
      <div class="lr sel"><svg class="ck"><use href="#tick"/></svg><i class="sw g"></i><strong class="un">v2500</strong><svg class="mem"><use href="#mem"/></svg></div>
      <div class="lr"><svg class="ck"><use href="#tick"/></svg><i class="sw r"></i><strong>v2000</strong><svg class="mem"><use href="#mem"/></svg></div>
      <div class="lr"><svg class="ck"><use href="#tick"/></svg><i class="sw c"></i><strong>v1500</strong><svg class="mem"><use href="#mem"/></svg></div>
      <div class="lr t first"><i class="ex"></i><svg class="ck"><use href="#untick"/></svg><svg class="ri"><use href="#raster"/></svg><em>R_virtual</em></div>
      <div class="lr t"><i class="ex op"></i><svg class="ck"><use href="#tick"/></svg><svg class="ri gi"><use href="#grp"/></svg><span>R_entrada</span></div>
      <div class="lr t ch"><i class="ex"></i><svg class="ck"><use href="#untick"/></svg><svg class="ri"><use href="#raster"/></svg><em>R_shannon</em></div>
      <div class="lr t ch"><i class="ex"></i><svg class="ck"><use href="#tick"/></svg><svg class="ri"><use href="#raster"/></svg><strong>R_pinsapo</strong></div>
      <div class="lr t ch"><i class="ex"></i><svg class="ck"><use href="#tick"/></svg><svg class="ri"><use href="#raster"/></svg><strong>R_orientaciones</strong></div>
      <div class="lr t ch"><i class="ex"></i><svg class="ck"><use href="#tick"/></svg><svg class="ri"><use href="#raster"/></svg><strong>R_dist_canales</strong></div>
    </div>
  </aside>
  <i class="split"></i>

  <section class="canvas">
    <svg class="map" viewBox="304 168 1133 818" width="1133" height="818">
      <g transform="translate(340 250) scale(.33333)" fill="none" stroke-linejoin="round" stroke-linecap="round">
        <!-- base terrain -->
        <g transform="translate(0 570)">
          <path class="k1" d="M770,28L745,38 715,60 685,92 667,120 610,145 520,168 435,190 410,202 320,212 220,230 197,245 185,290 158,370 150,415 140,560 130,680 112,850 100,1000 100,1090 75,1150 62,1190 50,1280 22,1402 140,1350 250,1290 380,1235 440,1225 560,1245 640,1270 720,1305 1000,1305 1300,900 1655,400 1640,270 1600,0Z"/>
          <path fill="#fff" d="M667,120L748,145 768,262 725,300 700,345 657,365 640,292 690,230Z"/>
          <path class="k0" d="M150,600L180,585 262,580 285,545 308,548 305,610 315,660 355,670 367,700 375,745 375,790 390,850 430,850 460,860 475,830 490,850 490,905 500,960 490,1010 460,1020 465,1035 480,1060 430,1088 355,1103 280,1103 240,1055 205,1010 215,882 150,880 140,840 150,790 210,782 248,745 240,715 215,690 200,655 155,640 140,620ZM505,905L550,925 548,1000 520,1005 510,950Z"/>
        </g>
        <g transform="translate(660 930)">
          <path class="k1" d="M500,0L1000,0 1000,38 1010,60 1065,95 1140,90 1165,110 1190,160 1230,205 1235,245 1190,262 1178,310 1115,325 1060,308 985,282 888,320 895,365 912,408 830,495 815,525 910,543 943,585 948,620 930,705 820,668 765,712 700,750 740,770 830,800 880,835 940,885 1050,940 1075,975 1100,993 1240,1033 1140,1045 1040,1062 600,1100 200,950 200,500Z"/>
          <path class="k0" d="M1110,95L1140,90 1165,110 1190,160 1225,200 1220,222 1200,230 1185,262 1150,268 1125,258 1117,200Z"/>
          <path class="k2" d="M560,205Q570,175 640,165L695,168 720,260 755,370 745,415 650,420 630,475 590,485 585,520 630,545 635,620 600,665 520,710 455,765 450,870 465,890 600,890 690,885 690,850 665,800 680,765 705,755 830,800 875,835 885,895 935,910 940,965 990,968 1005,990 1040,1062 1000,1090 940,1160 865,1212 780,1190 710,1185 650,1160 500,1160 430,1135 290,1085 200,1040 110,980 45,940 50,830 90,775 150,775 180,820 250,755 290,685 270,590 272,510 325,475 335,415 440,400 450,355 500,345 510,290 560,285Z"/>
        </g>
        <g transform="translate(900 0)">
          <path class="k0" d="M-130,598L-102,560 -60,525 -18,495 -6,438 0,385 20,332 55,328 62,365 75,405 125,440 137,475 200,437 265,412 312,400 322,340 372,265 378,220 395,180 410,172 475,172 540,120 620,62 650,47 690,38 735,42 720,80 745,140 760,185 757,315 900,330 940,335 1018,390 1068,320 1065,260 1130,220 1170,190 1175,225 1235,265 1240,325 1315,322 1345,360 1345,395 1320,455 1340,492 1275,570 1265,600 1235,625 1165,635 1188,660 1100,715 1050,712 980,750 960,820 935,865 890,910 830,925 755,968 748,865 735,815 700,812 660,800 620,830 635,875 600,890 610,830 590,815 550,828 565,870 540,885 530,830 520,785 485,785 475,735 445,718 395,735 380,680 350,680 295,655 215,665 145,672 125,740 90,745 85,680 68,680 60,740 25,745 10,690 5,610 -40,615 -80,610Z"/>
          <path class="k1" d="M12,580L75,550 100,520 125,560 125,590 70,610 20,595ZM18,350l20-12 15,0-8,18ZM470,650l15-15 10,10-15,15Z"/>
          <path stroke="#000" stroke-width="32" d="M109,790v4"/><path stroke="#000" stroke-width="16" d="M330,710v6M240,765v4M358,825v8"/>
        </g>
        <!-- grey patches -->
        <g transform="translate(0 570)">
          <path class="k2" d="M560,430Q570,395 600,397Q635,410 640,450L625,510 600,525 560,515 530,530 505,510 510,480 550,465ZM675,430Q690,390 720,388Q760,390 800,440Q812,460 815,530L860,555 862,580 720,595 690,580 685,540 735,505 715,485 690,480 675,450ZM875,600Q905,590 928,610L935,655Q985,660 985,690Q975,715 950,712L890,715 872,690ZM995,380Q1005,355 1030,352L1110,360 1125,430 1160,490 1155,530 1125,510 1110,480 1060,470 1040,430 1000,400ZM825,970Q862,970 858,1000L840,1012 810,1020 808,1085 750,1095 725,1060 730,1030 780,985Z"/>
          <g class="s2"><path stroke-width="34" d="M482,500h.1M537,620v6M413,682v10M775,866v8"/><path stroke-width="26" d="M596,746h1M717,744h1M838,744h.1"/><path stroke-width="46" d="M898,502h.1M960,443h2"/><path stroke-width="14" d="M165,925v6M1083,255v12M655,745h.1"/></g>
          <path stroke="#242424" stroke-width="54" d="M352,925h6"/>
          <path stroke="#000" stroke-width="12" d="M658,628v.1M658,683v.1M779,628v.1M833,630v.1M413,747v.1M841,1054v.1M841,1109v.1M418,565v.1M833,500v.1M655,932v.1M1078,565v.1M1020,626v.1M530,805v.1"/>
          <g class="s3"><path stroke-width="18" d="M715,560h.1M779,504h.1M1021,808h.1"/><path stroke-width="30" d="M774,1051h.1M1081,440h.1"/><path stroke-width="5" d="M960,433v14M903,615v20M1081,370v24"/><path stroke-width="34" d="M1083,805h.1"/><path stroke-width="38" d="M898,1175v62"/><path stroke-width="56" d="M840,1233h.1"/></g>
          <g class="s4"><path stroke-width="15" d="M839,1233h.1"/><path stroke-width="8" d="M1081,436v6M774,1048v4M779,503h.1"/></g>
        </g>
        <g transform="translate(660 930)">
          <g class="s2"><path stroke-width="22" d="M724,20h.1"/><path stroke-width="44" d="M849,20v8"/></g>
          <g class="s1"><path stroke-width="46" d="M422,512h2M540,570v6M540,592v.1M361,740v8M908,992v6"/><path stroke-width="32" d="M484,572h.1M500,578h20M787,860v12M665,324h.1M545,1056h.1M600,1056h.1"/><path stroke-width="40" d="M237,934v14M297,995v8M728,996h2M787,996h2M849,1118v12"/><path stroke-width="28" d="M421,925v14"/></g>
          <path stroke="#000" stroke-width="20" d="M787,148v.1M786,208v.1M849,442v4M727,508v4M727,568v2M848,569v.1M908,572h4M790,630v2"/>
          <path class="k0" d="M885,845l15,10 20,25-20-5Z"/>
          <path stroke="#000" stroke-width="8" d="M732,200v12M597,810h.1M544,877h.1M603,510h.1M181,692v4M181,748v4M908,868v4M665,865h.1M908,992h.1"/>
          <path class="k3" d="M590,915Q600,908 690,912L695,930V1080Q680,1095 655,1090L640,1070 625,1010 595,995 588,960Z"/>
          <g class="s3"><path stroke-width="44" d="M663,205v2"/><path stroke-width="24" d="M663,225v40M544,327v4M544,384h.1M544,506v4M484,1054h.1M545,935h.1M484,995h.1M360,448h.1"/><path stroke-width="36" d="M603,386v4M722,930v4M786,928v8M484,936h.1M425,445h6M360,928v8M362,990v4"/><path stroke-width="46" d="M482,444v6M848,1054v4"/></g>
          <g class="s4"><path stroke-width="18" d="M663,195v18M600,936h8M663,936v2"/><path stroke-width="28" d="M663,988v14M663,1052v8"/><path stroke-width="13" d="M482,440v14"/><path stroke-width="6" d="M604,384v6M853,1052v6"/></g>
        </g>
        <g transform="translate(900 0)"><g class="s2"><path stroke-width="34" d="M326,790v6"/><path stroke-width="24" d="M426,825v12M690,860v8M478,950h10"/><path stroke-width="42" d="M609,948v10"/></g></g>

        <!-- v1500 -->
        <g class="cy">
          <path transform="translate(0 570)" d="M517,180L510,200 485,210 478,232 455,220 400,245 398,258 380,250 350,262 348,292 330,280 308,288 310,325 345,343 375,345 372,330 395,322 385,350 408,358M820,540L855,542 865,560 862,578M540,697L500,680 470,675 442,690 448,712 448,765 475,772 505,772 520,795 575,790 580,755 600,760M458,820L458,800Q475,785 493,800V822M367,782L338,790 335,820 325,825 310,865 275,880 240,875 238,920 220,948M1200,570L1155,578 1125,600 1120,640 1060,660 1000,685 1005,710 1060,700 1020,745 990,765 960,775 912,820"/>
          <path transform="translate(900 0)" d="M628,252L625,235 585,212 550,225 530,222 518,238 520,262 490,265 482,300 505,315 470,345 430,352 415,365 403,385 408,430 438,455 445,485 478,488M498,530L500,580 520,585 540,540 570,512 575,550 562,580 580,597 605,575 605,500 625,468 640,490 660,510M798,540L790,515 820,480 850,492 885,440 905,390 930,380 955,390 985,408 985,455 940,490 945,515 985,488 990,525 1035,510 1025,480 1018,420 1035,385M720,685L785,685 800,720 740,725 690,750 685,780 665,795M215,665L260,690 285,715 322,720 325,770 345,790 345,850 358,915 350,950 325,935 315,870 310,810 275,805 265,750 225,710 195,692 210,720 230,750 235,780 255,810 260,880 272,905 250,952 230,940 220,840 205,820 200,750 175,740 168,705 140,705Q130,670 155,672M282,990L300,965 320,990 370,975 440,935 445,910 495,902M500,990L510,965 580,965 600,930 560,915"/>
          <path transform="translate(660 930)" d="M515,85L518,60 540,38 565,65 630,45 680,0M735,70L745,42 820,42 840,0M940,95L985,95 945,120 960,85 975,120 940,110M975,120L1015,125 980,150 1015,150 1035,185 1015,240 975,272M712,262L680,305 688,330 680,345 625,352 600,368 598,335 575,340 570,315 545,298M610,668L640,672 665,695 705,715 745,718M1005,1000L1042,1060M675,1165L680,1150 750,1152 770,1158 825,1148"/>
        </g>
        <!-- v2000 -->
        <g class="rd">
          <path transform="translate(0 570)" d="M770,242L815,242 810,258 775,275 770,295 785,320 792,335 790,362 760,362 750,325 730,322 722,345 728,382M1115,510L1110,530 1090,548 1075,560 1035,560 1020,570 1012,600 1035,625 1095,615 1110,600 1105,625 1070,650 1065,665 990,672"/>
          <path transform="translate(900 0)" d="M265,416L300,420 335,438 332,456 260,455 247,465 255,488 285,502M382,730L362,745 365,800 392,855 390,880 378,895 380,925 405,920 435,885 468,883"/>
          <path transform="translate(660 930)" d="M295,658L320,650 338,620 338,572 350,570 322,518 345,485 402,448 412,468 375,500 378,560 395,600 415,608 425,630 450,618 480,592 505,590 505,635 530,662 568,668 558,683M52,865L65,865 65,900 90,942 130,948 165,975 175,955 240,970 280,1000 300,1030 385,1060 410,1095 455,1108 470,1075 508,1078 525,1150 532,1122 545,1122 546,1155M278,998Q282,975 300,975Q318,985 315,992L345,1000 362,1015 378,990 425,998 480,975 510,955 575,950"/>
        </g>
        <!-- v2500 -->
        <g class="gn">
          <path transform="translate(0 570)" d="M770,28L745,38 715,60 685,92 667,120 610,145 520,168 435,190 410,202 320,212 220,230 197,245 185,290 158,370 150,415 140,560 130,680 112,850 100,1000 100,1090 75,1150 62,1190 50,1280 22,1402 140,1350 250,1290 380,1235 440,1225 560,1245 640,1270 720,1305M667,120L748,145 768,262 725,300 700,345 657,365 640,292 690,230Z
          M158,415L185,413 187,385 205,383 215,365 240,350 262,332 300,335 308,385 312,352 345,358 350,375 370,365 410,360 440,380 465,410 500,408 510,395 480,375 455,368 455,345 500,345 540,375 562,355 510,320 525,305 560,322 605,325 625,350 655,360M350,375L355,395 430,405 435,420 385,448 340,430 320,435 325,465 290,490 240,518 190,528 195,560 225,570 270,552M150,600Q140,625 155,640L200,655 215,690 240,715 248,745 210,782 150,790 140,840 150,880 215,882 205,1010 240,1055 280,1103 355,1103 430,1088 480,1060M150,600L180,585 262,580 270,552 285,545 308,548 305,610 315,660 355,670 367,700 375,745 375,790 390,850 430,850 445,862 460,825 490,830 490,905 500,960 490,1010 460,1020 465,1035 480,1060 520,1078 550,1050 585,1060 570,1100 550,1130 490,1125 465,1100 420,1115 415,1165 540,1175 580,1210 630,1265M390,850L395,875 375,900 330,912 315,960 300,1005 260,1015 240,1055M110,870L165,948 215,930
          M370,508L400,485 420,495 415,560 400,570ZM400,570L385,650 400,705 380,750M405,572L440,600 470,655 510,655 545,700 590,665 640,650 690,655 700,680 708,650 705,620 720,600M450,455L520,437 545,460 555,450 575,405 600,395 630,410 668,450M450,455L450,490 465,525 465,570 490,610 485,640 460,640 430,585 405,572
          M668,450Q668,410 700,392Q740,380 765,410L800,450 812,480 815,530 860,500 885,490 890,450 930,370 960,310 990,290 995,250 970,230 975,195 1010,185 1050,230 1060,290 1050,320 1030,350 1110,355 1120,440 1160,500 1165,560 1200,560M668,450L690,480 725,490 735,505 715,525 690,525 685,570 715,595 860,582 875,600 870,690 890,715 960,715 985,690 975,665 940,655 955,620 945,570 925,540 930,440 960,410 1000,425 1040,435 1060,475 1115,485 1140,530 1160,530M765,410L760,385 810,385 812,365 825,350 795,320 790,265 828,265 835,300 850,312 890,300 890,245 935,240 940,185 920,160 910,100 905,40 860,45 820,42 770,28M925,175L960,170 970,110 985,112 990,165 1025,175 1035,120 1050,90 1085,95 1120,78 1160,105 1200,85M1025,175L990,180M1035,150L1080,205 1090,240 1105,290 1110,355
          M860,640L840,640 835,700 825,740 760,740 720,760 680,762 650,742 610,742 590,790 575,810 500,840M660,778L700,790 730,775 780,765 840,770 857,800 820,840 795,835 785,800 745,820 745,860 710,890 740,930 790,890 850,870 855,900 830,940 800,975 750,1000 710,1060 700,1095 640,1095 630,1120 645,1165 670,1180 680,1240 705,1245M500,900Q520,860 590,858L600,900 635,935 665,910 640,870 645,835 690,830 690,880 680,910 735,900 760,880 755,850 740,850 740,815 780,800 800,845 845,820 855,785 800,762 750,770M520,905L570,890 610,960 645,980 665,970 685,910M520,905L550,925 550,1000 520,1010 510,940 500,910M550,1000L560,1050M860,770L890,760 920,780 875,840 880,890 910,888 940,865M650,742L660,778M710,890L735,910 800,880 820,885"/>
          <path transform="translate(900 0)" d="M-130,598L-102,560 -60,525 -18,495 -6,438 0,385 20,332 55,328 62,365 75,405 125,440 137,475 200,437 265,412 312,400 322,340 372,265 378,220 395,180 410,172 475,172 540,120 620,62 650,47 690,38 735,42 720,80 745,140 760,185 757,315 900,330 940,335 1018,390 1068,320 1065,260 1130,220 1170,190 1175,225 1235,265 1240,325 1315,322 1345,360 1345,395 1320,455 1340,492 1275,570 1265,600 1235,625 1165,635 1188,660 1100,715 1050,712 980,750 960,820 935,865 890,910 830,925 755,968
          M720,85L750,185 740,320 768,325 768,385 810,403 830,385 822,352 890,360 865,435 800,455 740,515 745,540 800,548 820,515 900,485 920,540 990,557 1045,540 1050,440 1090,370 1105,320 1095,250M1065,260L1115,240 1140,250 1145,300 1120,385 1140,405 1085,445 1070,500 1085,548 1140,542 1148,585 1120,610M1240,345L1300,325M1180,230L1230,275M757,315L740,320 690,290 665,235 655,195 658,152 605,138 588,150 590,185 555,208 605,205 635,235 635,260 600,268 605,325 570,310 535,325 510,395 500,465 480,495 445,505 420,460 385,480 310,500 300,550 290,570 290,510M900,335L925,355 960,360 940,335M960,360L1018,390
          M205,440L210,470 242,530 238,595 175,620 180,665M290,575L350,548 390,570 392,600 350,605 380,640 385,720 400,735 445,718 475,735 480,780 520,785 540,750 520,720 555,715 590,650 605,605 650,632 602,690 608,738 645,738 720,685 770,665 775,635 760,600M390,700L430,665 490,660 525,640 522,605 490,590 480,550 495,520 540,480 590,430 605,400 625,385 620,350 590,340 600,380 570,345 545,370 530,420 505,480M605,345L640,335 670,370 740,385 745,415 725,430 725,475 705,485 700,520 665,520 630,505 628,552 690,552 725,580 735,605 790,600 830,578 900,605 990,600 1030,580 1060,585 1072,625 1100,610 1185,612 1190,632 1165,635M640,515L710,525 740,555 800,548M800,615L840,595 880,615 880,650 860,655 870,685 910,685 920,620 975,625 985,650 1005,648 1010,610 1070,605M800,615L805,690 835,730 885,750 860,790 850,830 810,835 755,868M750,968L745,830 735,815 700,812 660,800 620,830 635,875 600,905 500,900 490,880 440,905 400,930 355,970 320,955 300,935 280,950 275,985 215,990M520,785L525,810 590,815 610,830 610,875M550,828L535,850 545,885 565,870 550,828M-50,613L5,615 15,700 25,745 60,740 68,680 85,680 90,745 125,740 130,690 180,665 235,655 250,670 295,655 350,680 385,680M180,665L215,665M715,975L755,965"/>
          <path transform="translate(660 930)" d="M1000,38L1010,60 1065,95 1140,90 1165,110 1190,160 1230,205 1235,245 1190,262 1178,310 1115,325 1060,308 985,282 888,320 895,365 912,408 830,495 815,525 910,543 943,585 948,620 930,705 820,668 765,712 705,750 740,770 830,800 880,835 940,885 1050,940 1075,975 1100,993 1240,1033 1140,1045 1040,1062 1000,1090 940,1160 865,1212 780,1190 710,1185 650,1160 500,1160 430,1135 290,1085 200,1040 110,980 45,940 -20,905
          M705,755L680,765 665,800 690,850 685,885 660,890 630,878 600,890 575,885 540,895 465,890 450,870 450,790 465,750 520,710 600,665 635,625 635,570 620,540 590,530 585,500 600,480 630,475 645,425 700,415 745,415 755,370 730,325 720,260 695,168 640,165 575,185 560,205 568,255 555,285 510,290 500,345 455,355 440,405 335,415 325,475 275,505 268,570 290,670 310,690 360,695 370,720 390,730 390,762 405,765 408,715 440,695 510,690 520,710M290,685L255,720 245,755 215,765 180,820 165,790 150,775 90,775 55,810 47,880 45,940M755,400L785,430 790,475 820,500M780,425h20M635,625L645,655 700,660 740,678 765,655 785,615 850,595 910,550M610,895L580,925 590,1000 630,1020 645,1090 670,1100 730,1090 790,1100 830,1105 825,1145 870,1155 895,1130 930,1120 940,1050 965,1020 1005,990 980,965 940,965 935,910 885,895 880,840M500,200L500,150 530,100 495,90 485,60 520,55 525,5 560,30 600,40M500,195L560,200M700,155L620,140 618,100 640,70 700,70 735,82 760,60 810,65 810,105 790,140 750,155 765,190 850,185 865,125 900,130 895,95 950,90 960,45 1000,42M985,0L1000,38"/>
        </g>
      </g>
    </svg>
  </section>
  <section class="rdock"><span class="t1">Estilo de capas</span><span class="t2">Caja de herramientas de Procesos</span></section>
</main>

<footer class="status">
  <span class="search"><svg viewBox="0 0 16 16"><circle cx="6.500" cy="6.500" r="5.200" fill="none" stroke="#888" stroke-width="1.500"/><path d="M10.500 10.500L15 15" stroke="#888" stroke-width="2"/></svg>Escriba para localizar (Ctrl+K)</span>
  <span class="lb l1">Coordenada</span><span class="fld coord">320674 4063459</span>
  <svg class="mouse" viewBox="0 0 20 20"><ellipse cx="7" cy="6.500" rx="4" ry="6" transform="rotate(-20 7 6.500)" fill="#ddd" stroke="#111" stroke-width="2"/><path d="M6 2l3 8M9 1l2 8" stroke="#111" stroke-width="1.500"/><circle cx="11.500" cy="14" r="4.500" fill="#fff" stroke="#111" stroke-width="2"/><circle cx="12" cy="14" r="1.400" fill="#111"/><path d="M13 5l5-3M1 13l5 1" stroke="#111" stroke-dasharray="2 1"/></svg>
  <span class="lb l2">Escala</span><span class="combo scale">1:38872<i class="dd"></i></span>
  <svg class="lock" viewBox="0 0 16 20"><path d="M3.500 10V6a4.500 4.500 0 0 1 9 0v4" fill="none" stroke="#777" stroke-width="2"/><rect x="0" y="9" width="16" height="10" rx="1.500" fill="#4c4c4c"/></svg>
  <span class="lb l3">Amplificador</span><span class="spin amp"><b>100%</b><i class="ud"></i></span>
  <span class="lb l4">Rotación</span><span class="spin rot"><b>0,0 °</b><i class="ud"></i></span>
  <svg class="ck rep"><use href="#tick"/></svg><span class="lb l5">Representar</span>
  <svg class="gl" viewBox="0 0 20 20"><path d="M3 3q7-5 14 0l3 6-4 2v4q-6 5-12 0v-4L0 9z" fill="#5c5c5c"/><path d="M2 7h16M4 12h12M10 1v17M6 2q-3 7 1 14M14 2q3 7-1 14" stroke="#ccc" fill="none" stroke-width=".9"/></svg>
  <span class="lb l6">EPSG:25830</span>
  <svg class="bub" viewBox="0 0 20 20"><circle cx="10" cy="9" r="9" fill="#4a4a4a"/><path d="M10 17l6 3v-6z" fill="#4a4a4a"/><path d="M4.500 9h2.500M8.700 9h2.500M13 9h2.500" stroke="#fff" stroke-width="2.400"/></svg>
</footer>

<div class="dialog">
  <div class="dt"><svg class="logo"><use href="#logo"/></svg><span>Segmentation</span><svg class="x" viewBox="0 0 14 14"><path d="M1 1l12 12M13 1L1 13" stroke="#1a1a1a" stroke-width="1.200"/></svg></div>
  <div class="tabs"><span class="tab act">Parámetros</span><span class="tab">Registro</span></div>
  <div class="frame">
    <label class="h28">Input Image</label>
    <div class="line"><span class="combo h27 grow"><svg class="ri"><use href="#raster"/></svg>R_virtual [EPSG:25830]<i class="dd"></i></span><span class="btn dots">…</span></div>
    <label class="h32">Segmentation algorithm</label>
    <span class="combo h24">meanshift<i class="dd"></i></span>
    <label class="h33">Spatial radius [opcional]</label>
    <span class="spin"><b>10</b><svg><use href="#clr"/></svg><i class="ud"></i></span>
    <label>Range radius [opcional]</label>
    <span class="spin"><b>15,000000</b><svg><use href="#clr"/></svg><i class="ud"></i></span>
    <label>Mode convergence threshold [opcional]</label>
    <span class="spin"><b>0,100000</b><svg><use href="#clr"/></svg><i class="ud"></i></span>
    <label>Maximum number of iterations [opcional]</label>
    <span class="spin"><b>100</b><svg><use href="#clr"/></svg><i class="ud"></i></span>
    <label>Minimum region size [opcional]</label>
    <span class="spin"><b>2000</b><svg><use href="#clr"/></svg><i class="ud"></i></span>
    <label class="h33">Processing mode</label>
    <span class="combo h24 focus">raster<i class="dd"></i></span>
    <div class="adv"><i></i>Advanced Parameters</div>
    <div class="group"><label>Output pixel type [opcional]</label><span class="combo h24">float<i class="dd"></i></span></div>
    <label class="h32">Output labeled image [opcional]</label>
    <div class="line"><span class="fld out">[Guardar en archivo temporal]</span><span class="btn dots2">…<i class="dd"></i></span></div>
    <div class="open"><svg class="ck"><use href="#tick"/></svg>Abrir el archivo de salida después de ejecutar el algoritmo</div>
  </div>
  <div class="foot1"><span class="prog">0%</span><span class="btn off">Cancelar</span></div>
  <div class="foot2"><span class="btn lot">Ejecutar como proceso por lotes...</span><span class="btn foc">Ejecutar</span><span class="btn">Cerrar</span><span class="btn">Ayuda</span></div>
</div>
</body>
</html>
```
FILE: styles.css
```css
* { box-sizing: border-box; }
body {
  margin: 0; width: 1913px; height: 1019px; overflow: hidden; position: relative;
  display: flex; flex-direction: column; background: #efefef; color: #000;
  font: 14.5px/18px "Liberation Sans", Arial, sans-serif;
}
i { font-style: normal; }
svg { flex: none; display: block; }
.defs { position: absolute; }

.titlebar { height: 28px; flex: none; background: #f3f3f3; display: flex; align-items: center; color: #808080; }
.titlebar .logo { width: 21px; height: 20px; margin-left: -6px; margin-right: 6px; opacity: .9; }
.wtitle, .dt span { font-family: "Open Sans", "Noto Sans", sans-serif; font-size: 14.6px; letter-spacing: -.18px; white-space: nowrap; }
.wtitle { padding-bottom: 2px; }
.winbtns { width: 160px; height: 28px; margin-left: auto; margin-right: 10px; }

.menubar { height: 22px; flex: none; display: flex; gap: 15.5px; padding: 2px 0 0 4px; border-bottom: 1px solid #cdcdcd; color: #9a9a9a; white-space: nowrap; font-size: 14.53px; }
.menubar u { text-underline-offset: 2px; }

.toolbar { height: 39px; flex: none; display: flex; align-items: center; padding-left: 7.5px; border-bottom: 1px solid #b0b0b0; background: linear-gradient(#fcfcfc, #efefef); position: relative; overflow: hidden; }
.toolbar::before { content: ""; position: absolute; left: 1px; top: 11px; width: 2px; height: 18px; background: radial-gradient(circle, #aaa 30%, transparent 35%) 0 0/2px 3px; }
.toolbar.last { height: 38px; border-bottom: 1px solid #b5b5b5; }
.s { width: 33px; height: 31px; flex: none; display: flex; align-items: center; justify-content: center; }
.s svg { width: 24px; height: 24px; }
.s.on { width: 32px; margin-right: 1px; border: 1px solid #b2b2b2; border-radius: 3px; background: #dcdcdc; }
.s.wide { width: 60px; }
.dis svg { opacity: .42; }
.gray { filter: grayscale(1); }
.tg { font: bold 7.5px "DejaVu Sans", sans-serif; fill: #555; }
.grip { width: 18px; height: 18px; flex: none; background: radial-gradient(circle, #a9a9a9 30%, transparent 35%) 0 0/3px 3px; background-clip: content-box; padding: 0 5px 0 7px; }
.sep { width: 8px; height: 28px; flex: none; background: linear-gradient(#d0d0d0, #d0d0d0) 4px 0/1px 100% no-repeat; }
.dd { width: 15px; height: 7px; flex: none; display: block; background: #4d4d4d; clip-path: polygon(2.5px 0.5px, 12.500px 0.5px, 7.500px 6.500px); }
.dd.off { background: #999; }

.combo, .fld, .btn, .prog { border: 1px solid #a9a9a9; border-radius: 3px; display: flex; align-items: center; white-space: nowrap; flex: none; }
.combo { background: linear-gradient(#fefefe, #efefef); padding: 0 5px; }
.combo .dd { margin-left: auto; }
.spin { border: 1px solid #a9a9a9; border-radius: 3px; background: #fff; height: 23px; display: flex; align-items: center; flex: none; overflow: hidden; padding-left: 5px; }
.spin b { font-weight: 400; flex: 1; }
.spin svg { width: 17px; height: 14px; margin-right: 12px; }
.ud { width: 17px; align-self: stretch; border-left: 1px solid #b5b5b5; position: relative; background: #f8f8f8; }
.ud::before, .ud::after { content: ""; position: absolute; left: 3px; width: 10px; height: 5px; background: #555; top: calc(50% - 7px); clip-path: polygon(0 100%, 100% 100%, 50% 0); }
.ud::after { top: calc(50% + 2px); clip-path: polygon(0 0, 100% 0, 50% 100%); }
.tspin { width: 100px; height: 24px; color: #8a8a8a; background: #f7f7f7; }
.tspin .ud::before, .tspin .ud::after { background: #9a9a9a; }
.px { width: 131px; height: 25px; margin: 0 4px 0 2px; color: #8a8a8a; }

.work { height: 822px; flex: none; display: flex; border-bottom: 1px solid #d0d0d0; }
.side { width: 47px; flex: none; background: linear-gradient(90deg, #fcfcfc, #eee); padding-top: 7px; }
.griph { display: block; width: 17px; height: 6px; margin-left: 14px; background: radial-gradient(circle, #bbb 30%, transparent 35%) 0 0/3px 3px; }
.side .griph { margin-bottom: 2px; }
.v { display: flex; height: 32px; align-items: center; padding-left: 1px; }
.v svg { width: 24px; height: 24px; }
.v .dd { margin-left: 4px; }

.docks { width: 249px; flex: none; border-left: 2px solid #bababa; display: flex; flex-direction: column; }
.dhead { height: 22px; flex: none; display: flex; align-items: center; padding: 0 2px 0 3px; gap: 3px; }
.dhead span { flex: 1; }
.dhead svg { width: 11px; height: 11px; }
.dtools { height: 29px; flex: none; display: flex; align-items: center; gap: 9px; padding-left: 7px; padding-bottom: 3px; }
.dtools svg { width: 16px; height: 16px; }
.dtools .dd { margin: 0 -5px 0 -5px; }
.navbox { height: 164px; flex: none; border: 1px solid #b5b5b5; border-left: 0; background: #fff; display: grid; grid-template: 145px 17px / 229px 17px; }
.navlist { overflow: hidden; padding-top: 1px; }
.nr { height: 22px; display: flex; align-items: center; white-space: nowrap; padding-left: 3px; }
.nr svg { width: 19px; height: 19px; margin: 0 6px 0 7px; }
.nr.sub { padding-left: 30px; }
.ex { width: 11px; height: 12px; flex: none; background: #555; clip-path: polygon(3px 1px, 3px 11px, 8px 6px); }
.ex.op { clip-path: polygon(0.500px 3px, 10.500px 3px, 5.500px 9px); }
.vs, .hs { background: #e3e3e3; display: flex; border-left: 1px solid #b5b5b5; }
.vs { flex-direction: column; }
.hs { border: 0; border-top: 1px solid #b5b5b5; border-right: 1px solid #b5b5b5; }
.hs em { width: 79px; background: #fafafa; border-right: 1px solid #b5b5b5; }
.vs em { height: 33px; background: #fafafa; border-bottom: 1px solid #b5b5b5; }
.vs b, .hs b { width: 16px; height: 16px; background: #f7f7f7; display: grid; place-items: center; flex: none; }
.vs b { border-bottom: 1px solid #b5b5b5; }
.hs b { border-right: 1px solid #b5b5b5; }
.vs .dn { margin-top: auto; border: 0; border-top: 1px solid #b5b5b5; }
.hs .rt { margin-left: auto; border: 0; border-left: 1px solid #b5b5b5; }
.vs b::after, .hs b::after { content: ""; width: 10px; height: 10px; background: #444; clip-path: polygon(0 8px, 10px 8px, 5px 3px); }
.vs .dn::after { clip-path: polygon(0 3px, 10px 3px, 5px 8px); }
.hs .lf::after { clip-path: polygon(7px 0, 7px 10px, 2px 5px); }
.hs .rt::after { clip-path: polygon(3px 0, 3px 10px, 8px 5px); }
.cn { background: #efefef; }
.griph.mid { margin: 1px 0 0 116px; height: 3px; flex: none; }
.dhead.cap { height: 26px; }
.dtools.lay { height: 27px; padding-bottom: 5px; }
.laybox { flex: 1; border: 1px solid #b5b5b5; border-left: 0; background: #fff; }
.lr { height: 21px; display: flex; align-items: center; padding-left: 28px; white-space: nowrap; }
.lr.sel { background: #efefef; }
.ck { width: 16px; height: 16px; }
.sw { width: 19px; height: 19px; border: 2px solid #1ed760; margin: 0 7px 0 7px; background: #fff; flex: none; }
.sw.g { background: #efefef; }
.sw.r { border-color: #f00; }
.sw.c { border-color: #a0ffff; }
.un { border-bottom: 2px solid #000; line-height: 16px; }
.mem { width: 18px; height: 18px; margin-left: auto; margin-right: 7px; }
.lr.t { height: 22px; padding-left: 7px; }
.lr.t.first { padding-top: 1px; }
.lr.t .ex { margin-right: 10px; }
.lr.t.ch { padding-left: 32px; }
.ri { width: 16px; height: 16px; margin: 0 8px 0 9px; }
.gi { width: 18px; height: 18px; margin-left: 8px; margin-right: 7px; }
.lr em { font-weight: 700; color: #808080; }
.split { width: 7px; flex: none; background: radial-gradient(circle, #bbb 30%, transparent 35%) 3px 0/3px 3px; background-clip: content-box; padding: 404px 0 400px 3px; }
.canvas { width: 1135px; flex: none; border: 1px solid #b5b5b5; background: #fff; overflow: hidden; margin-top: 1px; }
.k0 { fill: #000; } .k1 { fill: #242424; } .k2 { fill: #6c6c6c; } .k3 { fill: #b4b4b4; }
.s1 { stroke: #242424; } .s2 { stroke: #6c6c6c; } .s3 { stroke: #b4b4b4; } .s4 { stroke: #fff; }
.gn { stroke: #22fa28; stroke-width: 9.800px; }
.cy { stroke: #a0ffff; stroke-width: 7px; }
.rd { stroke: #f00; stroke-width: 7px; }
.rdock { flex: 1; display: flex; align-items: flex-end; padding-left: 7px; }
.rdock span { border: 1px solid #aaa; border-radius: 0 0 3px 3px; display: flex; align-items: flex-end; justify-content: center; white-space: nowrap; height: 26px; }
.rdock .t1 { width: 130px; background: #dcdcdc; padding-bottom: 1px; margin-bottom: 3px; }
.rdock .t2 { width: 257px; background: #f4f4f4; padding-bottom: 3px; margin-bottom: 1px; }

.status { height: 31px; flex: none; display: flex; align-items: flex-start; padding-top: 2px; }
.status > * { height: 26px; flex: none; white-space: nowrap; }
.search { width: 304px; margin-left: -1px; border: 1px solid #a9a9a9; border-radius: 3px; background: #fff; display: flex; align-items: center; color: #808080; padding-left: 8px; }
.search svg { width: 15px; height: 15px; margin-right: 8px; }
.lb { line-height: 25px; }
.l1 { margin-left: 557px; width: 83px; }
.fld { background: #fff; padding-left: 6px; }
.coord { width: 123px; }
.status .mouse { width: 20px; height: 20px; margin: 1px 0 0 4px; }
.l2 { margin-left: 14px; width: 47px; }
.scale { width: 100px; padding-left: 4px; background: #fff; }
.status .lock { width: 15px; height: 20px; margin: 2px 0 0 14px; }
.l3 { margin-left: 8px; width: 84px; }
.status .amp { width: 93px; height: 24px; } .status .rot { width: 89px; height: 24px; }
.l4 { margin-left: 9px; width: 67px; }
.status .ck { width: 17px; height: 17px; margin: 4px 0 0 6px; }
.l5 { margin-left: 6px; width: 97px; }
.status .gl { width: 20px; height: 20px; margin-top: 2px; }
.l6 { margin-left: 1px; width: 110px; }
.status .bub { width: 21px; height: 20px; margin-top: 3px; }

.dialog { position: absolute; left: 1249px; top: 64px; width: 674px; height: 911px; border: 1px solid #9a9a9a; border-radius: 9px; background: #f0f0f0; overflow: hidden; padding: 0 19px 0 12px; display: flex; flex-direction: column; box-shadow: 0 22px 50px rgba(0, 0, 0, .42), 0 0 12px rgba(0, 0, 0, .12); }
.dt { height: 36px; flex: none; margin: 0 -19px 0 -12px; background: #eff4f9; display: flex; align-items: center; padding: 0 0 2px 8px; }
.dt .logo { width: 20px; height: 20px; }
.dt span { margin-left: 6px; }
.dt .x { width: 13px; height: 13px; margin: 0 19px 0 auto; }
.tabs { height: 43px; flex: none; display: flex; align-items: flex-end; }
.tab { width: 85px; height: 28px; border: 1px solid #b0b0b0; border-bottom: 0; border-radius: 3px 3px 0 0; background: #e9e9e9; display: grid; place-items: center; }
.tab.act { width: 111px; height: 31px; background: #fbfbfb; margin-bottom: -1px; position: relative; padding-right: 4px; border-right: 1px solid #a0a0a0; }
.frame { height: 726px; flex: none; width: 642px; border: 1px solid #aaa; padding: 0 5px; display: flex; flex-direction: column; }
.frame label { height: 34px; flex: none; display: flex; align-items: center; }
.frame label.h28 { height: 29px; padding-bottom: 1px; } .frame label.h32 { height: 32px; } .frame label.h33 { height: 33px; }
.frame .h24 { height: 24px; } .h27 { height: 27px; }
.frame .h24 { padding-left: 4px; }
.line { display: flex; gap: 7px; flex: none; }
.grow { flex: 1; }
.line .combo .ri { margin: 0 5px 0 2px; }
.line .combo { padding-right: 6px; }
.btn { background: linear-gradient(#fefefe, #efefef); justify-content: center; width: 79px; height: 26px; }
.btn.dots { width: 31px; height: 25px; }
.btn.dots2 { width: 31px; height: 26px; padding-top: 1px; }
.dots2 .dd { margin: 8px -6px 0 -7px; }
.focus { border-color: #47a3e6; }
.adv { height: 30px; flex: none; display: flex; align-items: center; font-weight: 700; padding: 5px 0 0 2px; }
.adv i { width: 12px; height: 8px; background: #333; clip-path: polygon(0 0, 100% 0, 50% 100%); margin-right: 8px; margin-top: 2px; }
.group { height: 75px; flex: none; border: 1px solid #d8d8d8; border-radius: 2px; background: #ebebeb; margin-left: 1px; padding: 3px 13px 0 12px; }
.frame .out { flex: 1; height: 26px; color: #808080; padding-left: 2px; }
.open { display: flex; align-items: center; gap: 6px; margin-top: 10px; height: 17px; }
.foot1 { display: flex; gap: 7px; margin-top: 32px; height: 26px; flex: none; }
.prog { width: 555px; height: 25px; justify-content: center; background: #fff; }
.btn.off { color: #8a8a8a; border-color: #c4c4c4; width: 80px; }
.foot2 { display: flex; gap: 7px; margin-top: 7px; width: 642px; flex: none; }
.foot2 .btn { width: 80px; }
.foot2 .lot { width: 233px; margin-right: auto; }
.foot2 .foc { border-color: #47a3e6; background: linear-gradient(#fdfeff, #e4edf5); }
```
